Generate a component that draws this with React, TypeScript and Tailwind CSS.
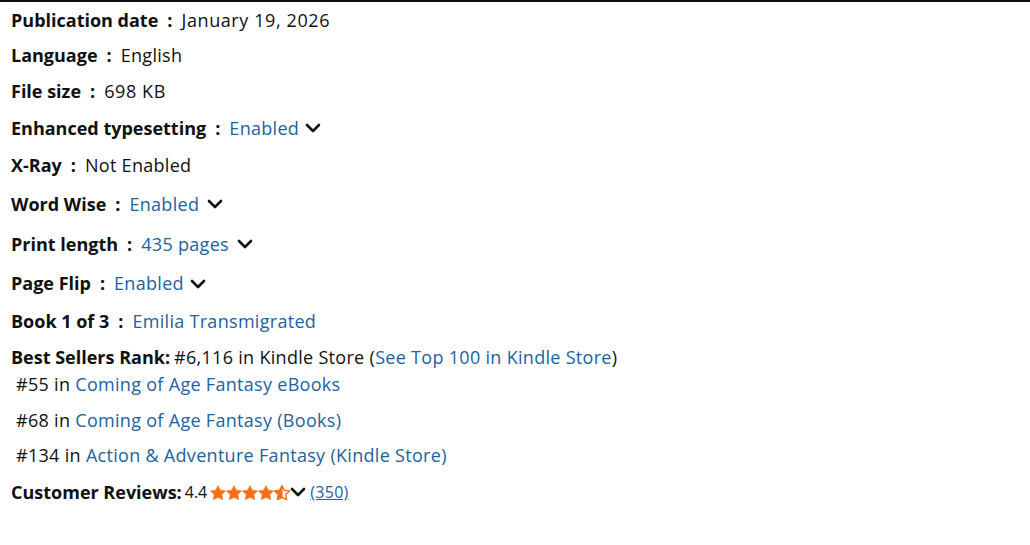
import { ReactNode } from 'react'

const ink = 'text-[#0f1111]'
const link = 'text-[#2162a1] tracking-[0.3px]'

const starPath = 'M8 0.6L10.35 5.3L15.6 5.9L11.75 9.6L12.75 14.8L8 12.3L3.25 14.8L4.25 9.6L0.4 5.9L5.65 5.3Z'

function Chevron({ className = 'ml-[6px]' }: { className?: string }) {
  return (
    <svg width="16" height="10" viewBox="0 0 16 10" className={className}>
      <polyline points="2,2 8,8 14,2" fill="none" stroke="#0f1111" strokeWidth="2.6" strokeLinecap="round" strokeLinejoin="round" />
    </svg>
  )
}

function Star({ half }: { half?: boolean }) {
  return (
    <svg width="16" height="15" viewBox="0 0 16 15">
      {half ? (
        <>
          <path d={starPath} fill="none" stroke="#f76f16" strokeWidth="1.4" strokeLinejoin="round" />
          <path d={starPath} fill="#f76f16" clipPath="url(#star-half)" />
        </>
      ) : (
        <path d={starPath} fill="#f76f16" stroke="#f76f16" strokeWidth="0.6" strokeLinejoin="round" />
      )}
    </svg>
  )
}

function Detail({ label, children, h }: { label: string; children: ReactNode; h: string }) {
  return (
    <div className={`flex items-center ${h}`}>
      <span className="font-bold">{label}</span>
      <span className="font-bold mx-[9px]">:</span>
      {children}
    </div>
  )
}

export default function App() {
  return (
    <div
      className={`min-h-[545px] bg-white border-t-2 border-[#0f1111] pl-[11px] text-[18px] ${ink}`}
      style={{ fontFamily: '"Open Sans", "Noto Sans", sans-serif' }}
    >
      <svg width="0" height="0" className="absolute">
        <defs>
          <clipPath id="star-half">
            <rect x="0" y="0" width="8.6" height="15" />
          </clipPath>
        </defs>
      </svg>

      <Detail label="Publication date" h="h-[36px]">
        <span className="tracking-[0.6px]">January 19, 2026</span>
      </Detail>
      <Detail label="Language" h="h-[35px]">
        <span className="tracking-[0.3px]">English</span>
      </Detail>
      <Detail label="File size" h="h-[36px]">
        <span className="tracking-[0.6px]">698 KB</span>
      </Detail>
      <Detail label="Enhanced typesetting" h="h-[38px]">
        <span className={link}>Enabled</span>
        <Chevron />
      </Detail>
      <Detail label="X-Ray" h="h-[37px]">
        <span className="tracking-[0.3px]">Not Enabled</span>
      </Detail>
      <Detail label="Word Wise" h="h-[40px]">
        <span className={link}>Enabled</span>
        <Chevron className="ml-[8px]" />
      </Detail>
      <Detail label="Print length" h="h-[40px]">
        <span className={link}>435 pages</span>
        <Chevron className="ml-[8px]" />
      </Detail>
      <Detail label="Page Flip" h="h-[39px]">
        <span className={link}>Enabled</span>
        <Chevron />
      </Detail>
      <Detail label="Book 1 of 3" h="h-[37px]">
        <span className={link}>Emilia Transmigrated</span>
      </Detail>

      <div className="flex items-center h-[34px]">
        <span className="font-bold mr-[4px]">Best Sellers Rank:</span>
        <span className="tracking-[0.3px]">#6,116 in Kindle Store (</span>
        <span className={link}>See Top 100 in Kindle Store</span>
        <span>)</span>
      </div>
      <div className="flex items-center h-[30px] -mt-[5px] pl-[5px] tracking-[0.3px]">
        <span className="mr-[5px]">#55 in</span>
        <span className={link}>Coming of Age Fantasy eBooks</span>
      </div>
      <div className="flex items-center h-[35px] mt-[4px] pl-[5px] tracking-[0.3px]">
        <span className="mr-[5px]">#68 in</span>
        <span className={link}>Coming of Age Fantasy (Books)</span>
      </div>
      <div className="flex items-center h-[35px] pl-[5px] tracking-[0.3px]">
        <span className="mr-[5px]">#134 in</span>
        <span className={link}>Action &amp; Adventure Fantasy (Kindle Store)</span>
      </div>
      <div className="flex items-center h-[38px]">
        <span className="font-bold mr-[3px]">Customer Reviews:</span>
        <span className="text-[16px] mr-[3px]">4.4</span>
        <span className="flex items-center">
          <Star />
          <Star />
          <Star />
          <Star />
          <Star half />
        </span>
        <Chevron className="ml-0" />
        <span className={`${link} underline text-[16px] ml-[4px]`}>(350)</span>
      </div>
    </div>
  )
}
